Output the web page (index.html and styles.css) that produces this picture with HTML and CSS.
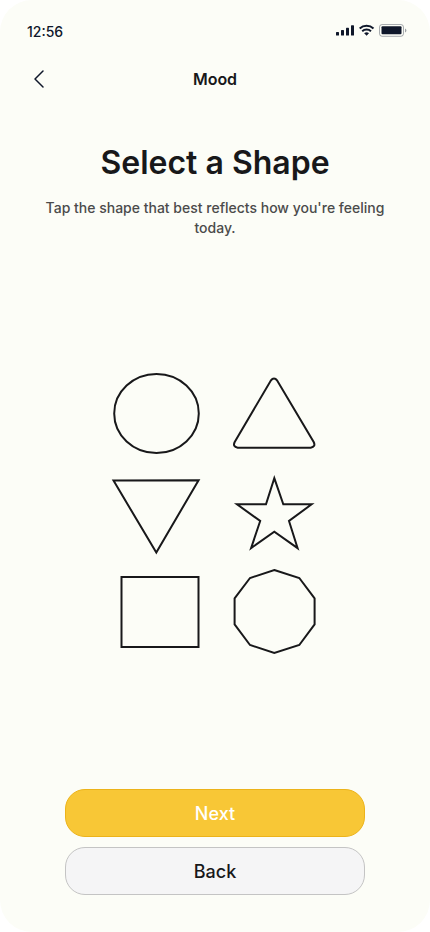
FILE: index.html
```html
<!DOCTYPE html>
<html lang="en">
<head>
<meta charset="utf-8">
<meta name="viewport" content="width=device-width, initial-scale=1">
<title>Mood</title>
<link rel="stylesheet" href="styles.css">
</head>
<body>
<div class="screen">
  <div class="status">
    <span>12:56</span>
    <svg class="status-icons" width="72" height="14" viewBox="0 0 72 14" aria-hidden="true">
      <g fill="#0f172a">
        <rect x="0" y="8" width="3" height="3.500" rx="0.6"/>
        <rect x="5" y="6" width="3" height="5.500" rx="0.6"/>
        <rect x="10" y="3.700" width="3" height="7.800" rx="0.6"/>
        <rect x="15" y="1.200" width="3" height="10.300" rx="0.6"/>
        <rect x="45.500" y="2.300" width="20" height="8" rx="1"/>
        <path d="M28.500 9.200a3.600 3.600 0 0 1 4.200 0l-2.100 2.200z" stroke="#0f172a" stroke-width="0.500" stroke-linejoin="round"/>
      </g>
      <g fill="none" stroke="#0f172a" stroke-width="2">
        <path d="M23.700 4.500a10 10 0 0 1 13.800 0"/>
        <path d="M26.200 7.300a6.400 6.400 0 0 1 8.800 0"/>
      </g>
      <rect x="43.500" y="0.500" width="24" height="11.800" rx="2.600" fill="none" stroke="#0f172a" stroke-opacity="0.350"/>
      <path d="M69 4.500v4q1.400-.6 1.400-2T69 4.500z" fill="#0f172a" fill-opacity="0.400"/>
    </svg>
  </div>
  <header class="bar">
    <button class="back" type="button" aria-label="Go back">
      <svg width="24" height="24" viewBox="0 0 24 24" aria-hidden="true"><path d="M16 4 8 12l8 8"/></svg>
    </button>
    <span class="bar-title">Mood</span>
  </header>
  <main>
    <h1>Select a Shape</h1>
    <p class="hint">Tap the shape that best reflects how you're feeling today.</p>
    <div class="shapes">
      <button type="button" aria-label="Circle"><svg viewBox="0 0 88 88"><ellipse cx="44.500" cy="43.500" rx="42.300" ry="39.500"/></svg></button>
      <button type="button" aria-label="Triangle"><svg viewBox="0 0 88 88"><path d="M40.700 10.700Q44 6.500 47.300 10.700L83.700 72Q86 76.800 80.700 77.700H7.700Q2.400 76.800 4.700 72Z"/></svg></button>
      <button type="button" aria-label="Inverted triangle"><svg viewBox="0 0 88 88"><path d="M1.500 12.600 86.600 12.200 44.300 84.500Z"/></svg></button>
      <button type="button" aria-label="Star"><svg viewBox="0 0 88 88"><path d="M44.300 10.200 53.300 36.300H81.600L59 53 67.600 80.100 44.300 63.700 21.100 80.100 30.200 53 7 36.300H36Z"/></svg></button>
      <button type="button" aria-label="Square"><svg viewBox="0 0 88 88"><path d="M9.500 11H86.500V81H9.500Z"/></svg></button>
      <button type="button" aria-label="Decagon"><svg viewBox="0 0 88 88"><path d="M44.300 4 69.300 12 84.600 32.300V58.300L69.300 79 44.300 87 20 79 4.600 58.300V32.300L20 12Z"/></svg></button>
    </div>
  </main>
  <footer class="actions">
    <button class="action next" type="button">Next</button>
    <button class="action" type="button">Back</button>
  </footer>
</div>
</body>
</html>
```

FILE: styles.css
```css
* { box-sizing: border-box; }

body {
  margin: 0;
  background: #fff;
  color: #18181a;
  font-family: Inter, sans-serif;
}

button {
  padding: 0;
  border: 0;
  background: none;
  color: inherit;
  font: inherit;
  cursor: pointer;
}

svg {
  display: block;
  overflow: visible;
}

.screen {
  display: flex;
  flex-direction: column;
  min-height: 100vh;
  padding: 20px 24px 37px;
  border-radius: 32px;
  background: #fcfdf7;
}

.status {
  display: flex;
  justify-content: space-between;
  height: 24px;
  padding-left: 3px;
  color: #0f172a;
  font-size: 14px;
  line-height: 24px;
  font-weight: 500;
}

.status-icons { margin: 4px -2px 0 0; }

.bar {
  display: grid;
  grid-template-columns: 32px 1fr 32px;
  align-items: center;
  margin-top: 23px;
  height: 24px;
}

.back svg { margin-left: 3px; }

.back path {
  fill: none;
  stroke: #0f172a;
  stroke-width: 1.5;
  stroke-linecap: round;
  stroke-linejoin: round;
}

.bar-title {
  text-align: center;
  font-size: 16px;
  line-height: 24px;
  font-weight: 600;
}

main {
  display: flex;
  flex: 1;
  flex-direction: column;
  align-items: center;
  text-align: center;
}

h1 {
  margin: 52px 0 0;
  font-size: 32px;
  line-height: 40px;
  font-weight: 600;
}

.hint {
  max-width: 344px;
  margin: 15px 0 0;
  color: #4b4b4b;
  font-size: 14px;
  line-height: 20px;
  font-weight: 500;
}

.shapes {
  display: grid;
  grid-template-columns: 88px 88px;
  gap: 10px 30px;
  margin: auto 0;
  padding-bottom: 4px;
}

.shapes svg {
  width: 88px;
  height: 88px;
  fill: none;
  stroke: #18181a;
  stroke-width: 2;
}

.actions {
  display: flex;
  flex-direction: column;
  gap: 10px;
  width: 100%;
  max-width: 300px;
  margin: 0 auto;
}

.action {
  height: 48px;
  padding-top: 2px;
  border: 1px solid #c4c4c4;
  border-radius: 20px;
  background: #f5f5f6;
  font-size: 18px;
  line-height: 24px;
  font-weight: 500;
}

.next {
  border-color: #ecb31a;
  background: #f8c736;
  color: #fff;
}
```
